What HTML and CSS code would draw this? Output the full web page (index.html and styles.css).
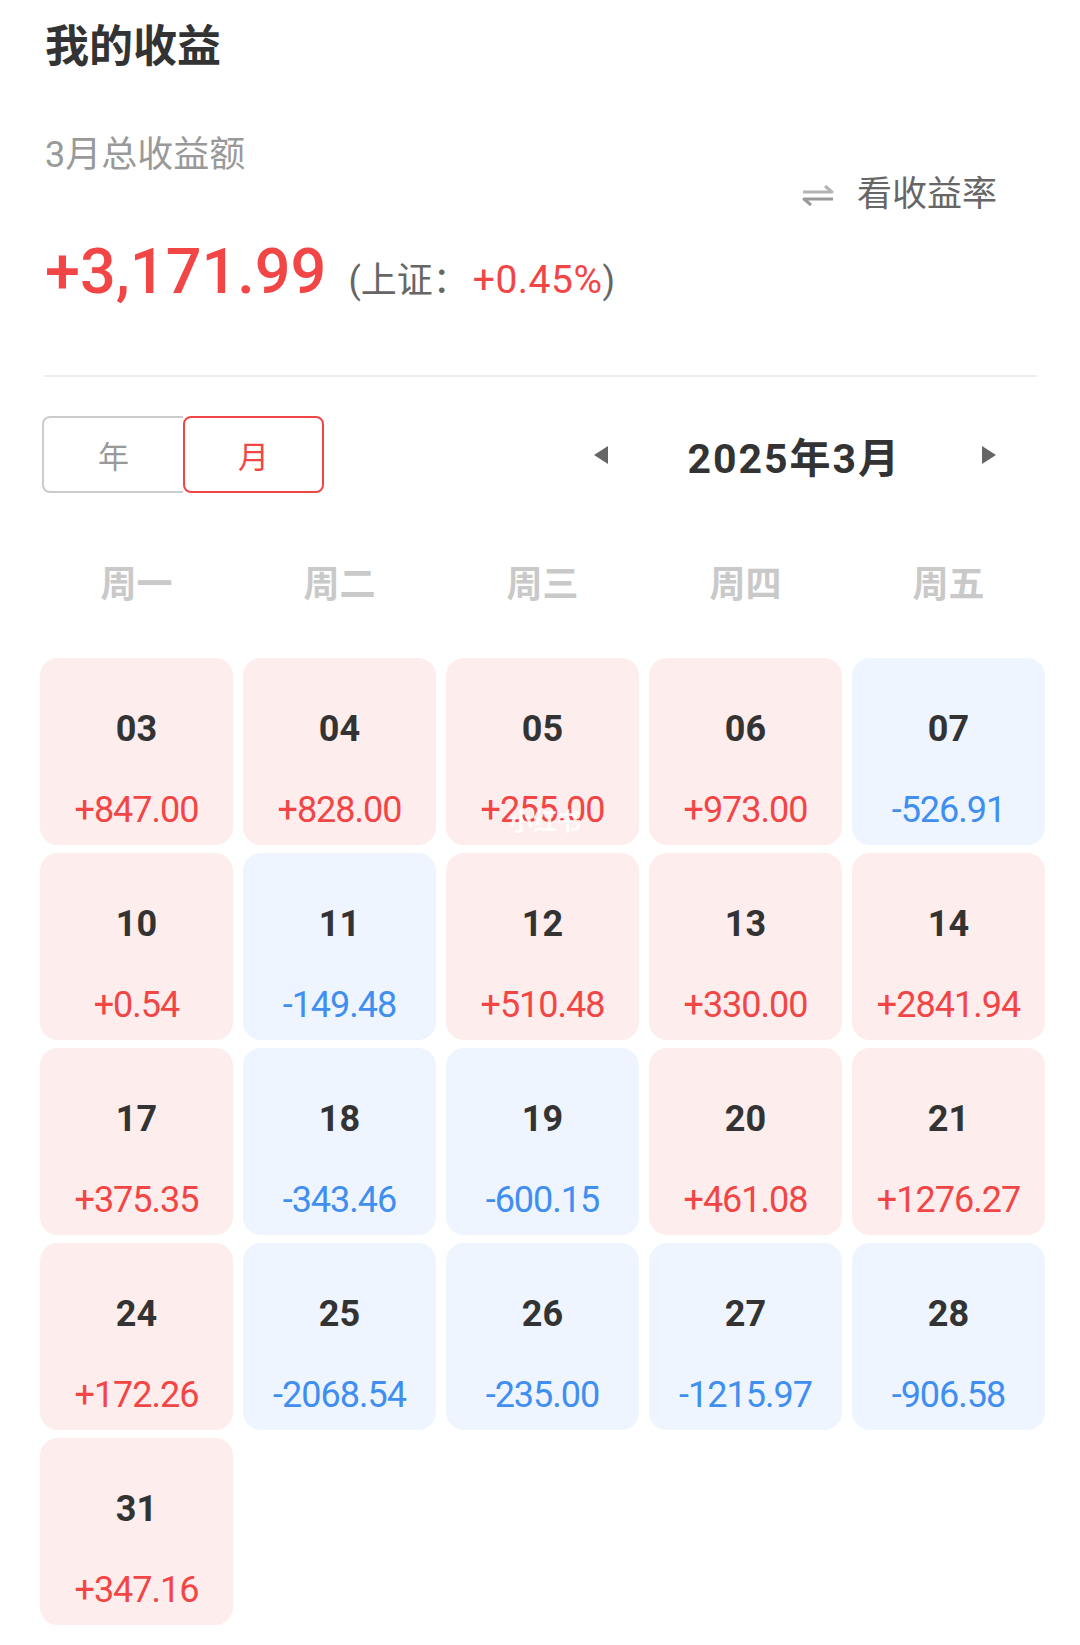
FILE: index.html
```html
<!DOCTYPE html>
<html lang="zh-CN">
  <head>
    <meta charset="UTF-8" />
    <meta name="viewport" content="width=device-width, initial-scale=1.0" />
    <title>我的收益</title>
    <link rel="stylesheet" href="styles.css">
  </head>
  <body>
    <div class="page">
      <h1 class="title">我的收益</h1>

      <div class="summary">
        <div class="summary-main">
          <div class="summary-label">3月总收益额</div>
          <div class="summary-amount">
            <span class="amount up">+3,171.99</span>
            <span class="index">(上证：<span class="index-value up">+0.45%</span>)</span>
          </div>
        </div>
        <div class="switch">
          <svg class="switch-icon" width="34" height="24" viewBox="0 0 34 24">
            <path d="M2 9 H31 L24 3" fill="none" stroke="#b4b4b4" stroke-width="3" stroke-linejoin="round" />
            <path d="M32 16 H3 L10 22" fill="none" stroke="#9a9a9a" stroke-width="3" stroke-linejoin="round" />
          </svg>
          <span>看收益率</span>
        </div>
      </div>

      <div class="divider"></div>

      <div class="toolbar">
        <div class="toggle">
          <button class="toggle-item">年</button>
          <button class="toggle-item active">月</button>
        </div>
        <div class="month-nav">
          <svg class="arrow" width="16" height="20" viewBox="0 0 16 20">
            <path d="M15 1 L1 10 L15 19 Z" fill="#666" />
          </svg>
          <span class="month-label">2025年3月</span>
          <svg class="arrow" width="16" height="20" viewBox="0 0 16 20">
            <path d="M1 1 L15 10 L1 19 Z" fill="#666" />
          </svg>
        </div>
      </div>

      <div class="weekdays">
        <span>周一</span>
        <span>周二</span>
        <span>周三</span>
        <span>周四</span>
        <span>周五</span>
      </div>

      <div class="calendar" id="calendar"></div>
    </div>

    <script>
      // day, profit for each trading day of the month
      const days = [
        ["03", "+847.00"], ["04", "+828.00"], ["05", "+255.00"], ["06", "+973.00"], ["07", "-526.91"],
        ["10", "+0.54"], ["11", "-149.48"], ["12", "+510.48"], ["13", "+330.00"], ["14", "+2841.94"],
        ["17", "+375.35"], ["18", "-343.46"], ["19", "-600.15"], ["20", "+461.08"], ["21", "+1276.27"],
        ["24", "+172.26"], ["25", "-2068.54"], ["26", "-235.00"], ["27", "-1215.97"], ["28", "-906.58"],
        ["31", "+347.16"],
      ];

      const calendar = document.getElementById("calendar");
      days.forEach(([day, value]) => {
        const cell = document.createElement("div");
        const type = value.startsWith("-") ? "down" : "up";
        cell.className = "day " + type;
        cell.innerHTML =
          '<span class="day-num">' + day + "</span>" +
          '<span class="day-value">' + value + "</span>";
        if (day === "05") {
          cell.innerHTML += '<span class="watermark">小红书</span>';
        }
        calendar.appendChild(cell);
      });
    </script>
  </body>
</html>
```

FILE: styles.css
```css
body {
  margin: 0;
  background: #fff;
  font-family: Roboto, "Noto Sans CJK SC", sans-serif;
  color: #333;
}
.page {
  width: 1005px;
  padding: 0 35px 0 40px;
}
.title {
  margin: 0;
  padding: 25px 0 0 5px;
  font-size: 44px;
  line-height: 44px;
  font-weight: bold;
  color: #333;
}
.summary {
  display: flex;
  justify-content: space-between;
  margin-top: 68px;
  padding-left: 5px;
}
.summary-label {
  font-size: 36px;
  line-height: 36px;
  color: #999;
}
.summary-amount {
  display: flex;
  align-items: baseline;
  margin-top: 66px;
}
.amount {
  font-size: 63px;
  line-height: 66px;
  font-weight: 500;
}
.index {
  margin-left: 22px;
  font-size: 36px;
  color: #666;
}
.index-value {
  margin-left: 4px;
  font-size: 39px;
  letter-spacing: 0.5px;
}
.up {
  color: #f24646;
}
.down {
  color: #3f8ef0;
}
.switch {
  display: flex;
  align-items: center;
  gap: 22px;
  margin-top: 40px;
  margin-right: 48px;
  height: 35px;
  font-size: 35px;
  line-height: 35px;
  color: #666;
}
.divider {
  height: 2px;
  background: #eee;
  margin: 70px 8px 0 4px;
}
.toolbar {
  display: flex;
  align-items: center;
  justify-content: space-between;
  margin-top: 39px;
  padding-left: 2px;
}
.toggle {
  display: flex;
}
.toggle-item {
  width: 141px;
  height: 77px;
  padding: 0;
  background: #fff;
  border: 2px solid #ccc;
  font-family: inherit;
  font-size: 31px;
  color: #999;
}
.toggle-item:first-child {
  border-radius: 8px 0 0 8px;
  border-right: none;
}
.toggle-item.active {
  border-color: #f24646;
  border-radius: 8px;
  color: #f24646;
}
.month-nav {
  display: flex;
  align-items: center;
  margin-right: 48px;
}
.month-label {
  margin: 0 80px 0 78px;
  font-size: 41px;
  font-weight: bold;
  letter-spacing: 2px;
  color: #333;
}
.weekdays {
  display: grid;
  grid-template-columns: repeat(5, 193px);
  column-gap: 10px;
  margin-top: 74px;
  text-align: center;
  font-size: 36px;
  line-height: 36px;
  font-weight: bold;
  color: #c9c9c9;
}
.calendar {
  display: grid;
  grid-template-columns: repeat(5, 193px);
  grid-auto-rows: 187px;
  gap: 8px 10px;
  margin-top: 55px;
}
.day {
  position: relative;
  display: flex;
  flex-direction: column;
  align-items: center;
  gap: 45px;
  padding-top: 53px;
  border-radius: 18px;
  box-sizing: border-box;
}
.day.up {
  background: #fdeded;
}
.day.down {
  background: #eef5fe;
}
.day-num {
  font-size: 36px;
  line-height: 36px;
  font-weight: bold;
  color: #333;
}
.day-value {
  font-size: 36px;
  line-height: 36px;
  letter-spacing: -1px;
}
.watermark {
  position: absolute;
  left: 63px;
  top: 152px;
  font-size: 24px;
  line-height: 24px;
  font-weight: bold;
  color: rgba(255, 255, 255, 0.9);
}
```
